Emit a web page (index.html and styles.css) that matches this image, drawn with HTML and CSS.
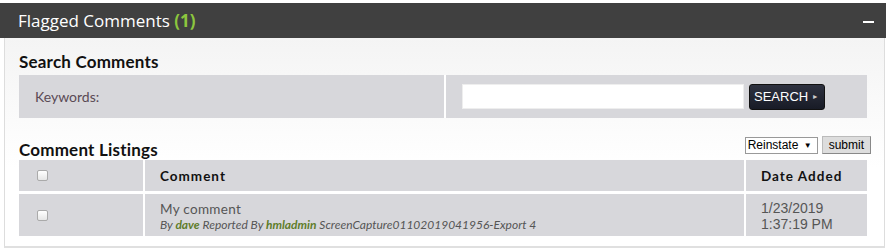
FILE: index.html
```html
<html>
    <head>
        <title>Flagged Comments</title>
        <link rel="stylesheet" href="styles.css">
    </head>
    <body>
        <div class="panel">
            <div class="panel-head">
                <span class="title">Flagged Comments <b class="count">(1)</b></span>
                <span class="collapse"></span>
            </div>
            <div class="panel-body">
                <h3>Search Comments</h3>
                <div class="search-row">
                    <div class="search-label">Keywords:</div>
                    <div class="search-field">
                        <input type="text" class="kw">
                        <button class="btn-search">SEARCH <span class="arrow">&#9658;</span></button>
                    </div>
                </div>

                <div class="list-head">
                    <h3>Comment Listings</h3>
                    <div class="actions">
                        <span class="action-select">Reinstate <span class="tri">&#9660;</span></span>
                        <button class="btn-submit">submit</button>
                    </div>
                </div>
                <table class="listing">
                    <tr class="head">
                        <th class="c-check"><span class="chk"></span></th>
                        <th class="c-comment">Comment</th>
                        <th class="c-date">Date Added</th>
                    </tr>
                    <tr>
                        <td class="c-check"><span class="chk"></span></td>
                        <td class="c-comment">
                            <div class="txt">My comment</div>
                            <div class="meta">By <b>dave</b> Reported By <b>hmladmin</b> ScreenCapture01102019041956-Export 4</div>
                        </td>
                        <td class="c-date">1/23/2019<br>1:37:19 PM</td>
                    </tr>
                </table>
            </div>
        </div>
    </body>
</html>
```

FILE: styles.css
```css
body
{
    margin: 0;
    background: #fff;
    font-family: Lato, "Open Sans", sans-serif;
}

.panel
{
    margin-top: 3px;
    width: 886px;
}

.panel-head
{
    height: 35px;
    background: #404040;
    display: flex;
    align-items: center;
    justify-content: space-between;
    padding: 0 12px 0 18px;
    box-sizing: border-box;
}

.title
{
    color: #fff;
    font-family: "Open Sans", sans-serif;
    font-size: 17px;
    padding-bottom: 1px;
}

.count
{
    color: #8cc63e;
    font-weight: bold;
}

.collapse
{
    display: block;
    width: 11px;
    height: 2px;
    background: #fff;
    margin-top: 2px;
}

.panel-body
{
    margin-left: 4px;
    width: 881px;
    box-sizing: border-box;
    border: 1px solid #ddd;
    border-top: none;
    border-bottom: 2px solid #e0e0e0;
    padding: 13px 17px 10px 14px;
    background: linear-gradient(#f4f4f4, #fff 130px);
}

h3
{
    margin: 0;
    font-size: 17px;
    font-weight: bold;
    color: #111;
    letter-spacing: 0.2px;
}

.search-row
{
    display: flex;
    height: 43px;
    margin-top: 3px;
    background: #d7d7db;
}

.search-label
{
    width: 427px;
    box-sizing: border-box;
    border-right: 2px solid #fff;
    padding-left: 16px;
    display: flex;
    align-items: center;
    font-size: 14px;
    color: #5a4a55;
}

.search-field
{
    display: flex;
    align-items: center;
    padding-left: 16px;
}

.kw
{
    width: 282px;
    height: 25px;
    border: 1px solid #eee;
    background: #fff;
    box-sizing: border-box;
    outline: none;
}

.btn-search
{
    margin-left: 5px;
    width: 76px;
    height: 26px;
    background: linear-gradient(#2e3240, #181b26);
    border: 1px solid #111;
    border-radius: 3px;
    color: #fff;
    font-family: "Liberation Sans", Arial, sans-serif;
    font-size: 13px;
    padding: 0 0 0 4px;
    text-align: left;
}

.arrow
{
    font-size: 7px;
    color: #ccc;
    vertical-align: 2px;
}

.list-head
{
    display: flex;
    justify-content: space-between;
    align-items: flex-end;
    margin-top: 18px;
}

.actions
{
    display: flex;
    align-items: center;
    margin-bottom: 6px;
    margin-right: -4px;
}

.action-select
{
    display: block;
    height: 15px;
    line-height: 15px;
    font-family: "Liberation Sans", Arial, sans-serif;
    font-size: 12px;
    border: 1px solid #999;
    background: #fff;
    padding: 0 2px;
    width: 67px;
    color: #000;
}

.tri
{
    font-size: 8px;
    margin-left: 2px;
    vertical-align: 1px;
}

.btn-submit
{
    margin-left: 4px;
    height: 18px;
    font-family: "Liberation Sans", Arial, sans-serif;
    font-size: 12px;
    background: #ddd;
    border: 1px solid #bbb;
    border-right-color: #888;
    border-bottom-color: #888;
    padding: 0 6px;
}

.listing
{
    width: 848px;
    border-collapse: separate;
    border-spacing: 0;
}

.listing th, .listing td
{
    background: #d7d7db;
    text-align: left;
    border-right: 2px solid #fff;
    padding: 0 0 0 15px;
}

.listing th:last-child, .listing td:last-child
{
    border-right: none;
}

.listing th
{
    height: 34px;
    border-bottom: 3px solid #fff;
    font-size: 13.5px;
    font-weight: bold;
    color: #111;
    letter-spacing: 1px;
}

.listing td
{
    height: 42px;
}

.c-check
{
    width: 106px;
    padding-left: 18px !important;
}

.c-date
{
    width: 106px;
}

.chk
{
    display: block;
    width: 9px;
    height: 9px;
    border: 1px solid #aaa;
    border-radius: 2px;
    background: linear-gradient(#fff, #e6e6e6);
}

.txt
{
    font-size: 13.5px;
    color: #555;
    letter-spacing: 0.3px;
    margin-top: 2px;
}

.meta
{
    font-size: 12px;
    font-style: italic;
    color: #555;
}

.meta b
{
    color: #5f7d2a;
}

.listing td.c-date
{
    font-family: "Liberation Sans", Arial, sans-serif;
    font-size: 14px;
    color: #555;
    line-height: 16px;
    padding-top: 2px;
}
```
